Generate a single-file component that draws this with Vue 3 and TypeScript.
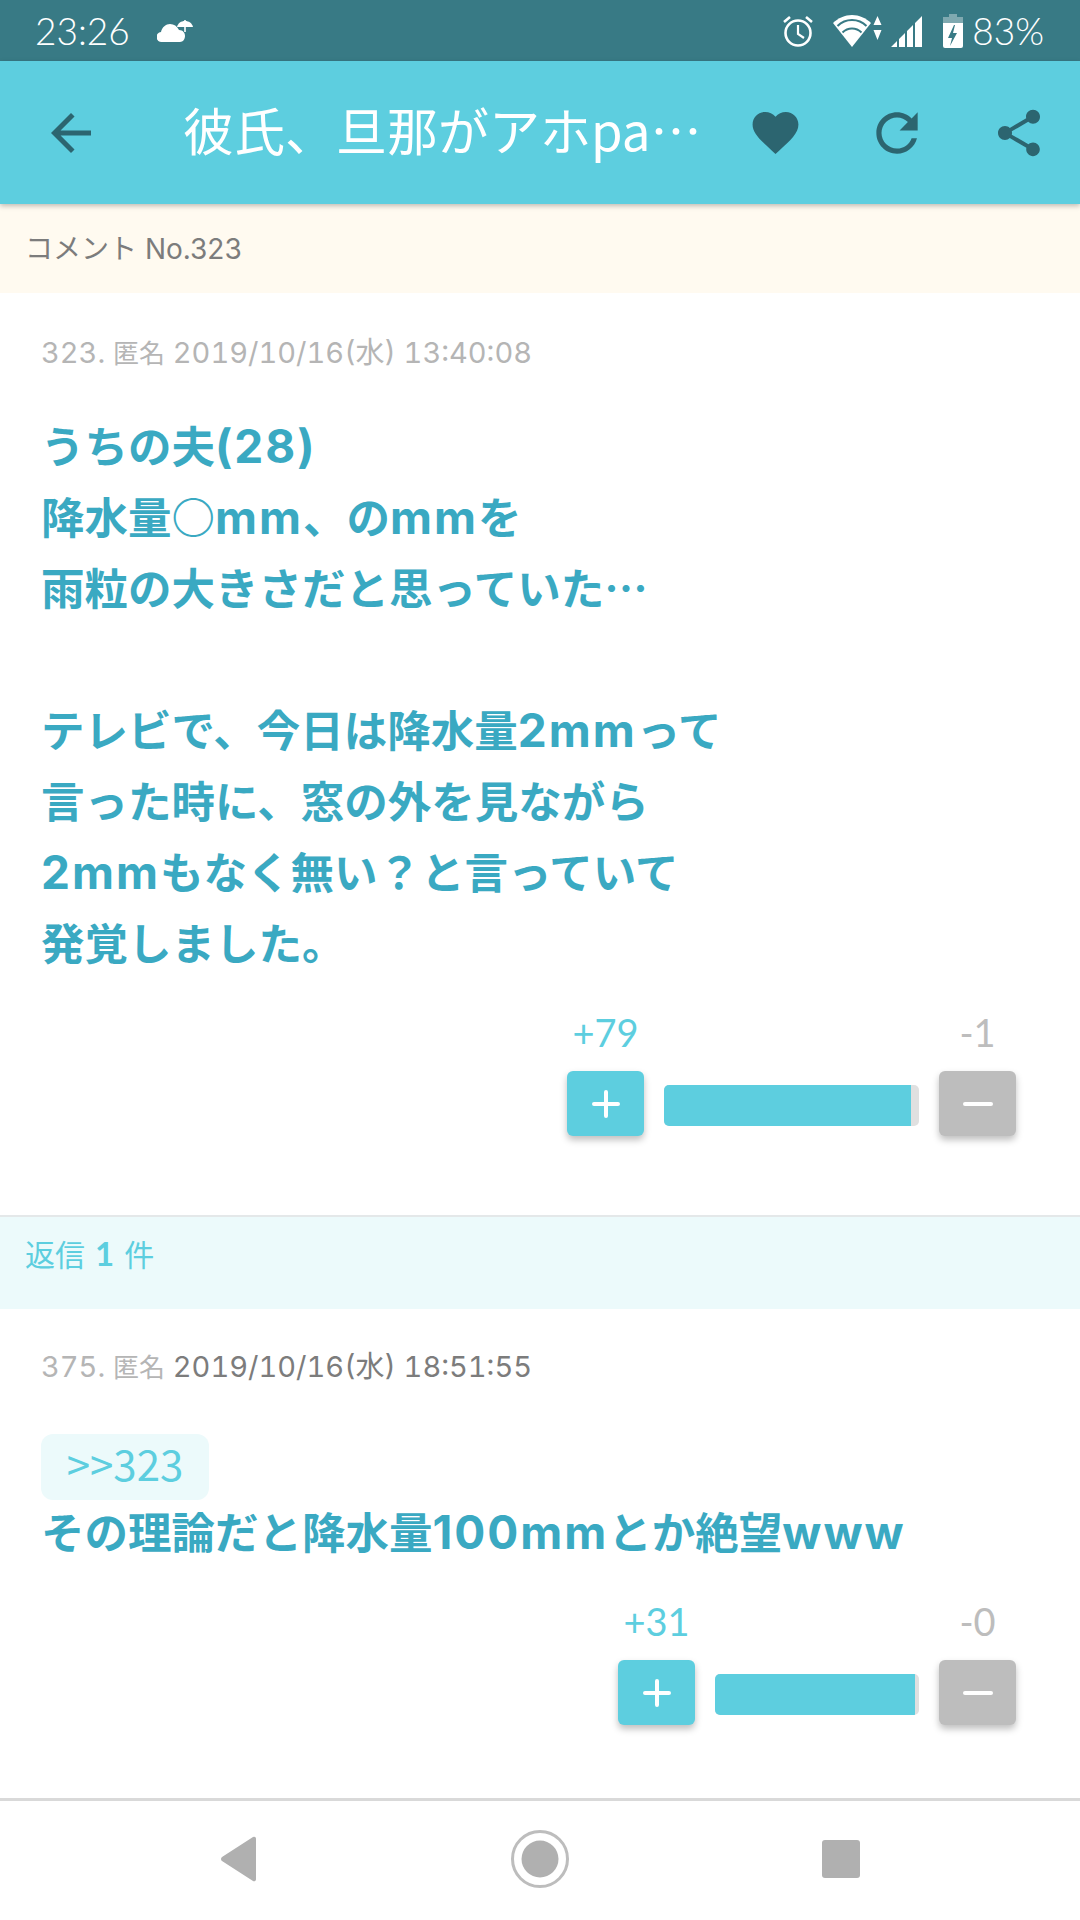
<script setup lang="ts">
type Comment = {
  no: number
  date: string
  dateDark: boolean
  anchor?: string
  lines: string[]
  plus: number
  minus: number
  barWidth: number
  fill: number
}

const comments: Comment[] = [
  {
    no: 323,
    date: '2019/10/16(水) 13:40:08',
    dateDark: false,
    lines: [
      'うちの夫(28)',
      '降水量○mm、のmmを',
      '雨粒の大きさだと思っていた…',
      '',
      'テレビで、今日は降水量2mmって',
      '言った時に、窓の外を見ながら',
      '2mmもなく無い？と言っていて',
      '発覚しました。',
    ],
    plus: 79,
    minus: 1,
    barWidth: 255,
    fill: 97,
  },
  {
    no: 375,
    date: '2019/10/16(水) 18:51:55',
    dateDark: true,
    anchor: '>>323',
    lines: ['その理論だと降水量100mmとか絶望www'],
    plus: 31,
    minus: 0,
    barWidth: 204,
    fill: 98,
  },
]

// latin runs get their own font and spacing, the rest stays in the CJK font
const splitLatin = (line: string) => line.split(/([A-Za-z0-9()]+)/).filter(Boolean)
const isLatin = (part: string) => /^[A-Za-z0-9()]+$/.test(part)
</script>

<template>
  <div class="screen">
    <div class="status">
      <div class="status-left">
        <span class="clock">23:26</span>
        <svg class="cloud" width="36" height="24" viewBox="0 0 36 24">
          <path fill="#fff" d="M5 23a5 5 0 0 1-1-10c1-5 5-8 9-8 4 0 7 2 9 6 4 0 6 3 6 6s-2 6-5 6z" />
          <path fill="#fff" d="M20 8c1-4 4-6 8-6s7 2 8 6z" />
          <path stroke="#fff" stroke-width="1.6" d="M28 1v12" />
        </svg>
      </div>
      <div class="status-right">
        <svg width="32" height="34" viewBox="0 0 32 34">
          <circle cx="16" cy="19" r="12.5" fill="none" stroke="#fff" stroke-width="2.6" />
          <path d="M16 11v9l6 4" fill="none" stroke="#fff" stroke-width="2.2" />
          <path d="M2 8l6-5M30 8l-6-5" stroke="#fff" stroke-width="2.6" />
        </svg>
        <svg class="wifi" width="50" height="34" viewBox="0 0 50 34">
          <path fill="#fff" d="M19 33L0 9C5 4 12 1 19 1s14 3 19 8z" />
          <path d="M4.500 12C8.500 8 13.500 6 19 6s10.500 2 14.500 6M9.500 18.500C12 16 15.500 14.500 19 14.500s7 1.500 9.500 4" fill="none" stroke="#387a85" stroke-width="2" />
          <path fill="#fff" d="M44.500 2l4 9h-8zM44.500 26l4-10h-8z" />
        </svg>
        <svg class="signal" width="32" height="32" viewBox="0 0 32 32">
          <path fill="#fff" d="M0 32l6-6v6zM8 32V24l6-6v14zM16 32V16l6-6v22zM24 32V8l7-7v31z" />
        </svg>
        <svg class="battery" width="20" height="34" viewBox="0 0 20 34">
          <path fill="#7fa9b0" d="M6 0h8v3h6v8H0V3h6z" />
          <path fill="#fff" d="M0 9h20v23a2 2 0 0 1-2 2H2a2 2 0 0 1-2-2z" />
          <path fill="#387a85" d="M11 11l-6 13h4l-2 8 7-13h-4l2-8z" />
        </svg>
        <span class="pct">83%</span>
      </div>
    </div>

    <header class="appbar">
      <button class="nav-btn">
        <svg width="60" height="60" viewBox="0 0 24 24"><path d="M20 11H7.830l5.590-5.590L12 4l-8 8 8 8 1.410-1.410L7.830 13H20v-2z" /></svg>
      </button>
      <h1 class="title">彼氏、旦那がアホpart12 の話を聞かせて</h1>
      <button class="action">
        <svg width="55" height="55" viewBox="0 0 24 24"><path d="M12 21.350l-1.450-1.320C5.400 15.360 2 12.280 2 8.500 2 5.420 4.420 3 7.500 3c1.740 0 3.410.81 4.500 2.090C13.090 3.810 14.760 3 16.500 3 19.580 3 22 5.420 22 8.500c0 3.780-3.400 6.860-8.550 11.540L12 21.350z" /></svg>
      </button>
      <button class="action">
        <svg width="62" height="62" viewBox="0 0 24 24"><path d="M17.650 6.350C16.200 4.900 14.210 4 12 4c-4.420 0-7.990 3.580-7.990 8s3.570 8 7.990 8c3.730 0 6.840-2.550 7.730-6h-2.080c-.82 2.330-3.040 4-5.650 4-3.310 0-6-2.690-6-6s2.690-6 6-6c1.660 0 3.140.69 4.220 1.780L13 11h7V4l-2.350 2.350z" /></svg>
      </button>
      <button class="action">
        <svg width="56" height="56" viewBox="0 0 24 24"><path d="M18 16.080c-.76 0-1.440.3-1.960.77L8.910 12.700c.05-.23.09-.46.09-.7s-.04-.47-.09-.7l7.050-4.110c.54.5 1.250.81 2.040.81 1.660 0 3-1.340 3-3s-1.340-3-3-3-3 1.340-3 3c0 .24.04.47.09.7L8.040 9.810C7.500 9.310 6.790 9 6 9c-1.660 0-3 1.340-3 3s1.340 3 3 3c.79 0 1.500-.31 2.040-.81l7.120 4.160c-.05.21-.08.43-.08.65 0 1.610 1.310 2.920 2.920 2.920 1.610 0 2.920-1.310 2.920-2.920s-1.310-2.920-2.920-2.920z" /></svg>
      </button>
    </header>

    <div class="notice">コメント No.323</div>

    <main class="content">
      <template v-for="(c, i) in comments" :key="c.no">
        <div v-if="i === 1" class="replies">返信 <b>1</b> 件</div>
        <article class="comment" :class="{ first: i === 0 }">
          <div class="meta">
            {{ c.no }}. <span class="author">匿名</span> <span :class="{ dark: c.dateDark }">{{ c.date }}</span>
          </div>
          <div class="body" :class="{ 'has-anchor': c.anchor }">
            <span v-if="c.anchor" class="anchor">{{ c.anchor }}</span>
            <p v-for="(line, n) in c.lines" :key="n">
              <template v-if="line">
                <span v-for="(part, k) in splitLatin(line)" :key="k" :class="{ latin: isLatin(part) }">{{ part }}</span>
              </template>
            </p>
          </div>
          <div class="votes">
            <div class="vote-row counts">
              <span class="count plus" :style="{ marginRight: c.barWidth + 40 + 'px' }">+{{ c.plus }}</span>
              <span class="count minus">-{{ c.minus }}</span>
            </div>
            <div class="vote-row">
              <button class="vote-btn plus-btn">
                <svg width="30" height="30" viewBox="0 0 30 30"><path d="M15 3v24M3 15h24" /></svg>
              </button>
              <div class="bar" :style="{ width: c.barWidth + 'px' }">
                <div class="bar-fill" :style="{ width: c.fill + '%' }"></div>
              </div>
              <button class="vote-btn minus-btn">
                <svg width="30" height="30" viewBox="0 0 30 30"><path d="M2 15h26" /></svg>
              </button>
            </div>
          </div>
        </article>
      </template>
    </main>

    <nav class="navbar">
      <svg width="40" height="46" viewBox="0 0 40 46"><path d="M34 1a2 2 0 0 1 3 2v40a2 2 0 0 1-3 2L3 25a2.500 2.500 0 0 1 0-4z" /></svg>
      <svg width="60" height="60" viewBox="0 0 60 60">
        <circle cx="30" cy="30" r="27.500" fill="none" stroke="#bdbdbd" stroke-width="3" />
        <circle cx="30" cy="30" r="18.500" />
      </svg>
      <svg width="40" height="40" viewBox="0 0 40 40"><rect width="38" height="38" x="1" y="1" rx="3" /></svg>
    </nav>
  </div>
</template>

<style>
html,
body {
  margin: 0;
  background: #fff;
}
</style>

<style scoped>
.screen {
  width: 1080px;
  height: 1920px;
  display: flex;
  flex-direction: column;
  overflow: hidden;
  font-family: "Noto Sans CJK JP", sans-serif;
  background: #fff;
}

.status {
  height: 61px;
  flex: none;
  background: #387a85;
  color: #fff;
  display: flex;
  align-items: center;
  justify-content: space-between;
  padding: 0 36px 0 35px;
  box-sizing: border-box;
  font-family: Lato, Roboto, sans-serif;
}

.status-left,
.status-right {
  display: flex;
  align-items: center;
}

.clock,
.pct {
  font-size: 37px;
  font-weight: 300;
  line-height: 1;
}

.cloud {
  margin-left: 27px;
}

.status-right .wifi {
  margin-left: 19px;
}

.status-right .signal {
  margin-left: 8px;
}

.status-right .battery {
  margin-left: 20px;
}

.pct {
  margin-left: 9px;
}

.appbar {
  height: 143px;
  flex: none;
  background: #5dcedf;
  display: flex;
  align-items: center;
  padding-left: 10px;
  box-shadow: 0 2px 5px rgba(0, 0, 0, 0.25);
  position: relative;
  z-index: 1;
}

.nav-btn,
.action {
  width: 122px;
  height: 122px;
  flex: none;
  border: 0;
  padding: 0;
  background: none;
  display: flex;
  align-items: center;
  justify-content: center;
  fill: #2c6570;
}

.title {
  flex: 1;
  min-width: 0;
  margin: 0 4px 8px 51px;
  font-size: 51px;
  font-weight: 400;
  color: #fff;
  white-space: nowrap;
  overflow: hidden;
  text-overflow: ellipsis;
}

.notice {
  height: 89px;
  flex: none;
  display: flex;
  align-items: center;
  padding: 0 0 4px 25px;
  box-sizing: border-box;
  background: #fffaf0;
  color: #7c7c7c;
  font-size: 28px;
  font-family: Inter, "Noto Sans CJK JP", sans-serif;
}

.content {
  flex: 1;
  min-height: 0;
}

.comment {
  padding: 36px 41px 0;
}

.comment.first {
  height: 924px;
  padding-top: 38px;
  box-sizing: border-box;
  border-bottom: 2px solid #e4e8e9;
}

.meta {
  font-size: 29px;
  line-height: 44px;
  color: #b5b5b5;
  font-family: Inter, "Noto Sans CJK JP", sans-serif;
  font-variant-numeric: tabular-nums;
}

.author {
  font-size: 26px;
}

.meta .dark {
  color: #7c7c7c;
}

.body {
  margin-top: 33px;
  font-size: 43.500px;
  font-weight: 700;
  line-height: 71px;
  color: #3aa9c2;
}

.latin {
  font-family: Inter, sans-serif;
  font-size: 46px;
  letter-spacing: 2px;
}

.body p {
  height: 71px;
  margin: 0;
}

.body.has-anchor {
  margin-top: 44px;
}

.anchor {
  display: block;
  width: 168px;
  height: 66px;
  margin-bottom: -5px;
  border-radius: 12px;
  background: #ecfafb;
  color: #5dcedf;
  font-size: 42px;
  font-weight: 400;
  line-height: 57px;
  text-align: center;
}

.votes {
  margin-top: 35px;
  padding-right: 23px;
}

.vote-row {
  display: flex;
  align-items: center;
  justify-content: flex-end;
}

.counts {
  height: 40px;
  margin-bottom: 19px;
}

.count {
  width: 77px;
  flex: none;
  text-align: center;
  font-size: 38px;
  line-height: 40px;
  font-family: Lato, sans-serif;
}

.count.plus {
  color: #5dcedf;
}

.count.minus {
  color: #bdbdbd;
}

.vote-btn {
  width: 77px;
  height: 65px;
  flex: none;
  border: 0;
  padding: 0;
  border-radius: 6px;
  display: flex;
  align-items: center;
  justify-content: center;
  box-shadow: 0 4px 7px rgba(0, 0, 0, 0.25);
}

.vote-btn svg {
  fill: none;
  stroke: #fff;
  stroke-width: 4;
  stroke-linecap: round;
}

.plus-btn {
  background: #5dcedf;
}

.minus-btn {
  background: #bdbdbd;
}

.bar {
  height: 41px;
  margin: 4px 20px 0;
  border-radius: 5px;
  background: #e0e0e0;
  overflow: hidden;
}

.bar-fill {
  height: 100%;
  background: #5dcedf;
}

.replies {
  height: 92px;
  display: flex;
  align-items: center;
  gap: 10px;
  padding: 0 25px 20px;
  box-sizing: border-box;
  background: #ecfafb;
  color: #5dcedf;
  font-size: 30px;
}

.replies b {
  font-family: Lato, sans-serif;
  font-size: 33px;
}

.navbar {
  height: 122px;
  flex: none;
  box-sizing: border-box;
  border-top: 3px solid #d9d9d9;
  padding-bottom: 3px;
  display: grid;
  grid-template-columns: 301px 301px 301px;
  justify-content: center;
  justify-items: center;
  align-items: center;
  fill: #b0b0b0;
}
</style>
